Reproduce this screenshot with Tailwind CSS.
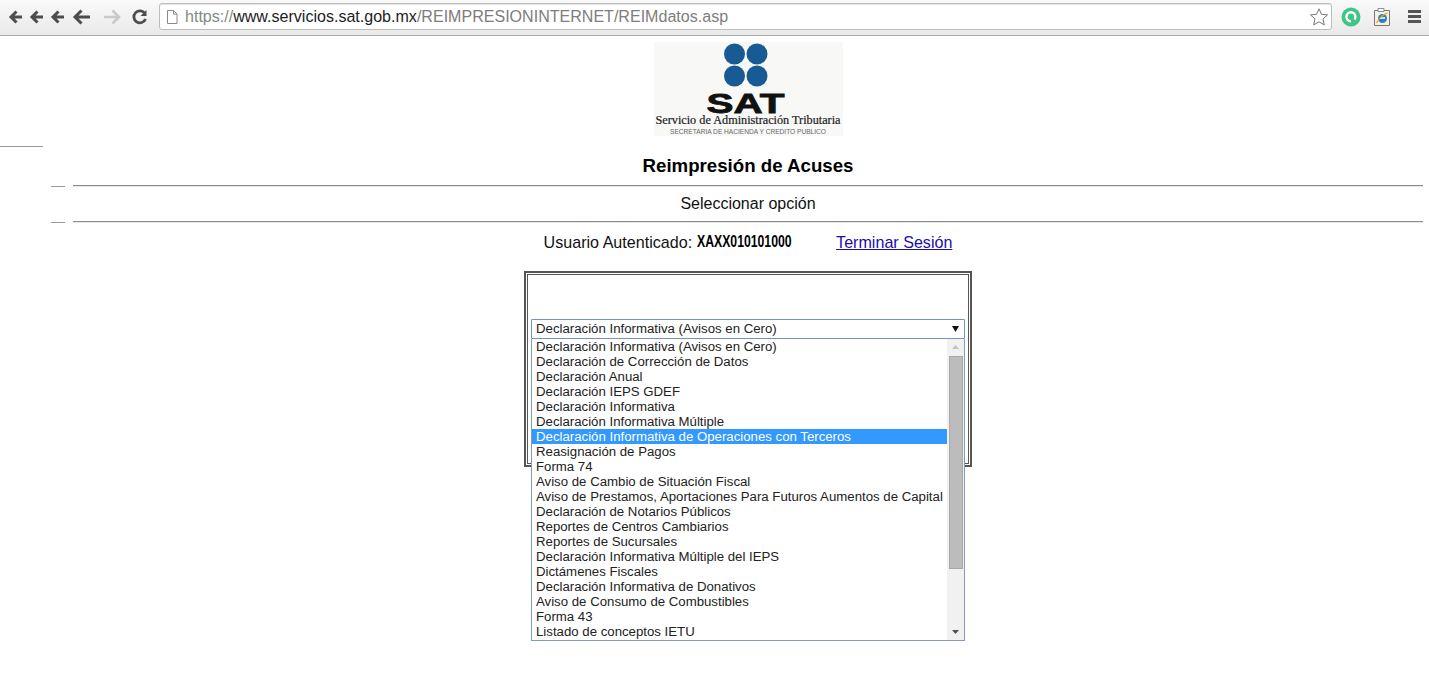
<!DOCTYPE html>
<html lang="es">
  <head>
    <meta charset="UTF-8" />
    <script src="https://cdn.jsdelivr.net/npm/@tailwindcss/browser@4"></script>
    <title>Reimpresión de Acuses</title>
  </head>
  <body class="relative h-[697px] overflow-hidden bg-white font-['Liberation_Sans',Arial,sans-serif] text-[#111]">
    <!-- browser toolbar -->
    <header class="flex h-[36px] items-center border-b border-[#a9a9a9] bg-gradient-to-b from-[#fafafa] to-[#e9e9e9] pb-[2px]">
      <div class="flex w-[159px] shrink-0 items-center pl-[8px]">
        <svg class="h-[20px] w-[150px]" viewBox="0 0 150 20" fill="none">
          <g stroke="#4d4d4d" stroke-width="3">
            <path d="M3 10h11M8.500 4.500 3 10l5.500 5.500" />
            <path d="M24 10h11M29.500 4.500 24 10l5.500 5.500" />
            <path d="M45 10h11M50.500 4.500 45 10l5.500 5.500" />
            <path d="M67 10h15M73.500 3.500 67 10l6.500 6.500" />
          </g>
          <path d="M111 10H96M104.500 3.500 111 10l-6.500 6.500" stroke="#c9c9c9" stroke-width="2.600" />
          <path d="M137.500 12a6 6 0 1 1-.6-5.500" stroke="#4d4d4d" stroke-width="2.800" />
          <path d="M138.500 3v6h-6z" fill="#4d4d4d" />
        </svg>
      </div>
      <div class="flex h-[27px] w-[1173px] shrink-0 items-center rounded-[3px] border border-[#bdbdbd] bg-white pl-[5px] shadow-[inset_0_1px_1px_#e4e4e4]">
        <svg class="h-[16px] w-[14px] shrink-0" viewBox="0 0 14 16" fill="#fff" stroke="#8a8a8a">
          <path d="M2.500 1.500h6l3.500 3.500v9.500h-9.500zM8.500 1.500v3.500h3.500" />
        </svg>
        <div class="ml-[6px] text-[16.060px] leading-none whitespace-nowrap text-[#7f8c84]">https://<span class="text-[#222]">www.servicios.sat.gob.mx</span><span class="text-[#7d7d7d]">/REIMPRESIONINTERNET/REIMdatos.asp</span></div>
        <svg class="mr-[2px] ml-auto h-[20px] w-[20px] shrink-0" viewBox="0 0 20 20" fill="#fff" stroke="#777">
          <path d="m10 1.800 2.500 5.500 6 .6-4.500 4 1.300 6L10 14.800 4.700 17.900l1.300-6-4.500-4 6-.6z" />
        </svg>
      </div>
      <div class="flex flex-1 items-center justify-between pr-[8px] pl-[9px]">
        <svg class="h-[20px] w-[20px]" viewBox="0 0 20 20" fill="none">
          <circle cx="10" cy="10" r="9.500" fill="#3ec686" />
          <path d="M13.500 12.500a4.500 4.500 0 1 0-3.500 1.800" stroke="#fff" stroke-width="2.400" />
        </svg>
        <svg class="h-[20px] w-[20px] -translate-x-[3px]" viewBox="0 0 20 20" fill="none">
          <path d="M2.500 3.500h15v15h-15z" fill="#f4f1df" stroke="#777" />
          <path d="M6 1.500h6v3H6z" fill="#fff" stroke="#777" stroke-width=".8" />
          <circle cx="10.500" cy="11.500" r="4.500" fill="#2f7fc9" />
          <path d="M8 11h5" stroke="#fff" stroke-width="1.500" />
          <path d="M4.500 16c3-5 7-9 11-10" stroke="#e0a62e" stroke-width="1.200" />
        </svg>
        <div class="flex w-[13px] flex-col gap-[2px]">
          <div class="h-[3px] bg-[#555]"></div>
          <div class="h-[3px] bg-[#555]"></div>
          <div class="h-[3px] bg-[#555]"></div>
        </div>
      </div>
    </header>

    <!-- page -->
    <main class="mr-[6px] ml-[73px] flex flex-col items-center">
      <svg class="mt-[6px] h-[94px] w-[189px]" viewBox="0 0 189 94">
        <rect width="189" height="94" fill="#f8f8f6" />
        <g fill="#175a94">
          <circle cx="80.500" cy="12" r="10.500" />
          <circle cx="103" cy="12" r="10.500" />
          <circle cx="80.500" cy="34" r="10.500" />
          <circle cx="103" cy="34" r="10.500" />
        </g>
        <text x="91.500" y="71" text-anchor="middle" textLength="78" lengthAdjust="spacingAndGlyphs" font-family="Liberation Sans" font-weight="700" font-size="28" fill="#111" stroke="#111" stroke-width=".8">SAT</text>
        <text x="94" y="82" text-anchor="middle" textLength="185" lengthAdjust="spacingAndGlyphs" font-family="Liberation Serif" font-size="11.500" fill="#222" stroke="#222" stroke-width=".2">Servicio de Administración Tributaria</text>
        <text x="94" y="92" text-anchor="middle" textLength="156" lengthAdjust="spacingAndGlyphs" font-family="Liberation Sans" font-size="6.500" fill="#666">SECRETARIA DE HACIENDA Y CREDITO PUBLICO</text>
      </svg>
      <h1 class="mt-[19px] text-[18.670px] leading-[21px] font-bold text-black">Reimpresión de Acuses</h1>
      <div class="mt-[9px] h-[2px] w-full border-t border-[#8c8c8c] bg-[#e6e6e6]"></div>
      <p class="mt-[8px] text-[16px] leading-[18px]">Seleccionar opción</p>
      <div class="mt-[8px] h-[2px] w-full border-t border-[#8c8c8c] bg-[#e6e6e6]"></div>
      <div class="mt-[10px] flex h-[18px] items-center text-[16.100px] leading-[18px]">
        <span>Usuario Autenticado:</span>
        <span class="ml-[5px] inline-block w-[95px] origin-left scale-x-[0.765] text-[16px] font-bold whitespace-nowrap text-black">XAXX010101000</span>
        <a href="#" class="ml-[44px] text-[#1a0dab] underline">Terminar Sesión</a>
      </div>
      <!-- frame behind the open select -->
      <div class="mt-[20px] h-[196px] w-[448px] border-[2px] border-[#555] p-[1px]">
        <div class="h-full border border-[#555]"></div>
      </div>
    </main>

    <!-- open select, lies over the frame -->
    <div class="absolute top-[319px] left-[531px] w-[434px] text-[13.230px] leading-[15px] text-[#222]">
      <div class="flex h-[20px] items-center justify-between rounded-[1px] border border-[#6f93c9] bg-white pr-[5px] pb-[1px] pl-[4px]">
        <span>Declaración Informativa (Avisos en Cero)</span>
        <svg class="h-[6px] w-[7px]" viewBox="0 0 7 6"><path d="M0 0h7L3.500 6z" fill="#111" /></svg>
      </div>
      <div class="flex h-[302px] border border-t-0 border-[#7f9db9] bg-white">
        <ul class="flex-1 whitespace-nowrap">
          <li class="h-[15px] pl-[4px]">Declaración Informativa (Avisos en Cero)</li>
          <li class="h-[15px] pl-[4px]">Declaración de Corrección de Datos</li>
          <li class="h-[15px] pl-[4px]">Declaración Anual</li>
          <li class="h-[15px] pl-[4px]">Declaración IEPS GDEF</li>
          <li class="h-[15px] pl-[4px]">Declaración Informativa</li>
          <li class="h-[15px] pl-[4px]">Declaración Informativa Múltiple</li>
          <li class="h-[15px] bg-[#3399ff] pl-[4px] text-white">Declaración Informativa de Operaciones con Terceros</li>
          <li class="h-[15px] pl-[4px]">Reasignación de Pagos</li>
          <li class="h-[15px] pl-[4px]">Forma 74</li>
          <li class="h-[15px] pl-[4px]">Aviso de Cambio de Situación Fiscal</li>
          <li class="h-[15px] pl-[4px]">Aviso de Prestamos, Aportaciones Para Futuros Aumentos de Capital</li>
          <li class="h-[15px] pl-[4px]">Declaración de Notarios Públicos</li>
          <li class="h-[15px] pl-[4px]">Reportes de Centros Cambiarios</li>
          <li class="h-[15px] pl-[4px]">Reportes de Sucursales</li>
          <li class="h-[15px] pl-[4px]">Declaración Informativa Múltiple del IEPS</li>
          <li class="h-[15px] pl-[4px]">Dictámenes Fiscales</li>
          <li class="h-[15px] pl-[4px]">Declaración Informativa de Donativos</li>
          <li class="h-[15px] pl-[4px]">Aviso de Consumo de Combustibles</li>
          <li class="h-[15px] pl-[4px]">Forma 43</li>
          <li class="h-[15px] pl-[4px]">Listado de conceptos IETU</li>
        </ul>
        <div class="flex w-[17px] shrink-0 flex-col items-center bg-[#f1f1f1]">
          <svg class="mt-[6px] h-[4px] w-[7px]" viewBox="0 0 7 4"><path d="M3.500 0 7 4H0z" fill="#c2c2c2" /></svg>
          <div class="mt-[7px] h-[213px] w-[14px] border border-[#a8a8a8] bg-[#bcbcbc]"></div>
          <svg class="mt-auto mb-[6px] h-[4px] w-[7px]" viewBox="0 0 7 4"><path d="M0 0h7L3.500 4z" fill="#505050" /></svg>
        </div>
      </div>
    </div>

    <!-- stray rule fragments at the left edge of the page -->
    <div class="absolute top-[146px] left-0 h-px w-[43px] bg-[#999]"></div>
    <div class="absolute top-[186px] left-[51px] h-px w-[14px] bg-[#999]"></div>
    <div class="absolute top-[222px] left-[51px] h-px w-[14px] bg-[#999]"></div>
  </body>
</html>
